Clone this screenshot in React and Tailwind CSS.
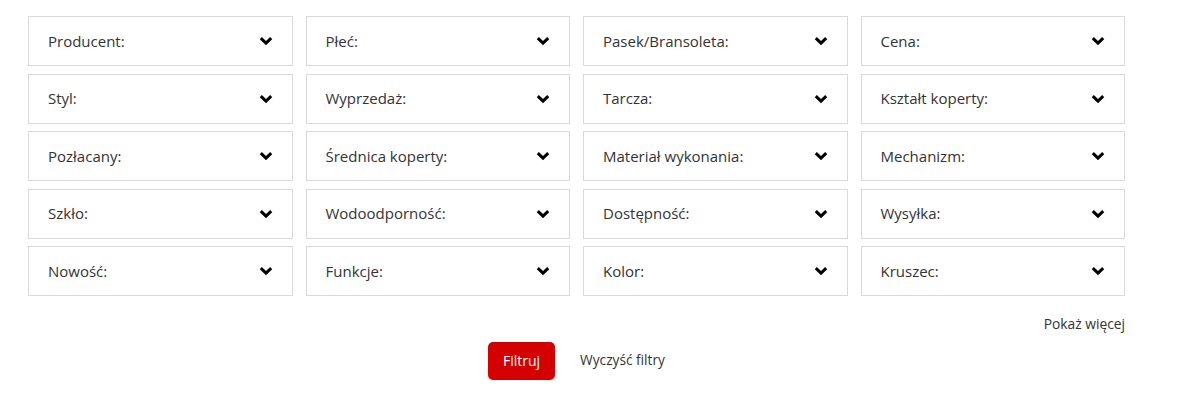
import React from 'react';

const filters = [
    'Producent:', 'Płeć:', 'Pasek/Bransoleta:', 'Cena:',
    'Styl:', 'Wyprzedaż:', 'Tarcza:', 'Kształt koperty:',
    'Pozłacany:', 'Średnica koperty:', 'Materiał wykonania:', 'Mechanizm:',
    'Szkło:', 'Wodoodporność:', 'Dostępność:', 'Wysyłka:',
    'Nowość:', 'Funkcje:', 'Kolor:', 'Kruszec:',
];

const Chevron = () => (
    <svg width="14" height="10" viewBox="0 0 14 10" fill="none">
        <path d="M1.8 2.2 L7 7.2 L12.2 2.2" stroke="#000" strokeWidth="3" strokeLinecap="butt" strokeLinejoin="miter" />
    </svg>
);

export default function App() {
    return (
        <div className="w-[1179px] h-[407px] bg-white font-['Open_Sans',sans-serif] text-[#333]">
            <div className="ml-[28px] w-[1097px] pt-[16px]">
                {/* Filter grid */}
                <div className="grid grid-cols-4 gap-x-[13px] gap-y-[7.5px]">
                    {filters.map((f) => (
                        <div key={f} className="h-[50px] border border-[#d9d9d9] flex items-center justify-between pl-[19px] pr-[19px] text-[15px]">
                            <span>{f}</span>
                            <Chevron />
                        </div>
                    ))}
                </div>

                <div className="flex justify-end mt-[18px] text-[13.8px]">
                    <span>Pokaż więcej</span>
                </div>

                {/* Actions */}
                <div className="flex justify-center items-center gap-[25px] mt-[7px]">
                    <button className="w-[67px] h-[38px] rounded-[5px] bg-[#d40000] text-white text-[14px] font-medium">
                        Filtruj
                    </button>
                    <span className="text-[13.7px]">Wyczyść filtry</span>
                </div>
            </div>
        </div>
    );
}
